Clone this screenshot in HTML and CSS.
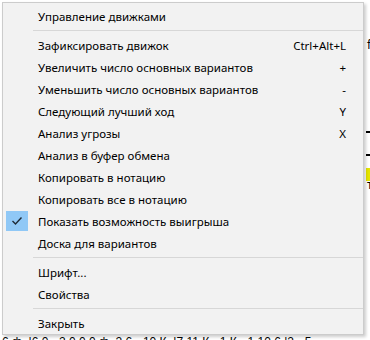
FILE: index.html
```html
<!DOCTYPE html>
<html lang="ru">
<head>
  <meta charset="UTF-8">
  <title>Меню анализа</title>
  <link rel="stylesheet" href="styles.css">
</head>
<body>

<div class="app">
  <!-- bits of the window behind the popup -->
  <div class="app-edge">
    <span class="mark mark-f">f</span>
    <span class="tick tick-1"></span>
    <span class="tick tick-2"></span>
    <span class="hl"></span>
    <span class="mark mark-t">т</span>
  </div>
  <div class="status">6 ф. |6.0 - 2.0 0.0 ф. 2.6 - 10 К, |7 11 К - 1 К - 1 10 6 |2 - 5</div>

  <!-- Context menu -->
  <div class="menu">
    <div class="item"><span class="label">Управление движками</span><span class="key"></span></div>
    <div class="sep"></div>
    <div class="item"><span class="label">Зафиксировать движок</span><span class="key">Ctrl+Alt+L</span></div>
    <div class="item"><span class="label">Увеличить число основных вариантов</span><span class="key">+</span></div>
    <div class="item"><span class="label">Уменьшить число основных вариантов</span><span class="key">-</span></div>
    <div class="item"><span class="label">Следующий лучший ход</span><span class="key">Y</span></div>
    <div class="item"><span class="label">Анализ угрозы</span><span class="key">X</span></div>
    <div class="item"><span class="label">Анализ в буфер обмена</span><span class="key"></span></div>
    <div class="item"><span class="label">Копировать в нотацию</span><span class="key"></span></div>
    <div class="item"><span class="label">Копировать все в нотацию</span><span class="key"></span></div>
    <div class="item checked">
      <span class="check">
        <svg width="12" height="10" viewBox="0 0 12 10"><polyline points="1.5,5 4.5,8 10.5,1.5" fill="none" stroke="#1e2a36" stroke-width="1.4"/></svg>
      </span>
      <span class="label">Показать возможность выигрыша</span><span class="key"></span>
    </div>
    <div class="item"><span class="label">Доска для вариантов</span><span class="key"></span></div>
    <div class="sep"></div>
    <div class="item"><span class="label">Шрифт...</span><span class="key"></span></div>
    <div class="item"><span class="label">Свойства</span><span class="key"></span></div>
    <div class="sep"></div>
    <div class="item"><span class="label">Закрыть</span><span class="key"></span></div>
  </div>
</div>

</body>
</html>
```

FILE: styles.css
```css
body {
  margin: 0;
  background: #ffffff;
  font-family: "Noto Sans", "Open Sans", Arial, sans-serif;
  font-size: 11.5px;
  color: #000;
}

.app {
  position: relative;
  width: 370px;
  height: 340px;
  overflow: hidden;
}

.app-edge {
  position: absolute;
  left: 364px;
  top: 0;
  width: 6px;
  height: 334px;
  background: #ffffff;
}

.mark {
  position: absolute;
  left: 3px;
  font-size: 12px;
  line-height: 14px;
}

.mark-f { top: 38px; }
.mark-t { top: 178px; }

.tick {
  position: absolute;
  left: 2px;
  width: 4px;
  height: 2px;
  background: #000;
}

.tick-1 { top: 131px; }
.tick-2 { top: 154px; }

.hl {
  position: absolute;
  left: 2px;
  top: 168px;
  width: 4px;
  height: 13px;
  background: #e6e600;
}

.status {
  position: absolute;
  left: 2px;
  top: 335px;
  white-space: nowrap;
  font-family: "Liberation Sans", Arial, sans-serif;
  font-size: 12px;
  line-height: 14px;
}

.menu {
  position: absolute;
  left: 2px;
  top: 2px;
  width: 360px;
  padding: 2px 0 0;
  background: #f2f2f2;
  border: 1px solid #cccccc;
  box-shadow: 2px 2px 3px rgba(0, 0, 0, 0.2);
}

.item {
  position: relative;
  display: flex;
  align-items: center;
  height: 22px;
  padding: 0 17px 0 35px;
}

.label {
  flex: 1;
  white-space: nowrap;
}

.key {
  white-space: nowrap;
  text-align: right;
}

.check {
  position: absolute;
  left: 3px;
  top: 1px;
  width: 22px;
  height: 20px;
  background: #90c8f6;
  display: flex;
  align-items: center;
  justify-content: center;
}

.sep {
  height: 1px;
  margin: 3px 0 3px 30px;
  background: #d7d7d7;
}
```
